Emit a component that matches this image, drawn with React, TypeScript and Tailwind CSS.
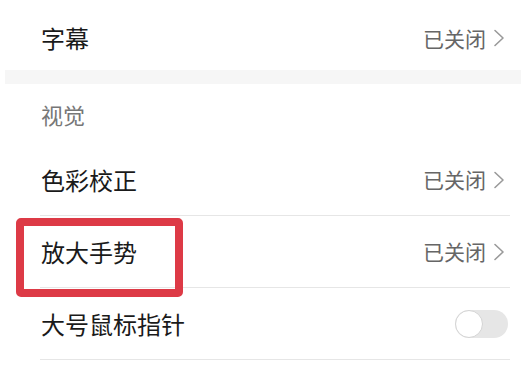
import React from "react";

const font = { fontFamily: '"Noto Sans CJK SC", "Noto Sans", sans-serif' };

function Chevron() {
  return (
    <svg width="14" height="18" viewBox="0 0 14 18" className="ml-[6px]">
      <path d="M3 1.5 L11 9 L3 16.5" fill="none" stroke="#9a9a9a" strokeWidth="1.6" strokeLinecap="round" strokeLinejoin="round" />
    </svg>
  );
}

function NavRow({ title }: { title: string }) {
  return (
    <div className="h-[72px] ml-[40px] mr-[11px] flex items-center justify-between border-b border-[#e6e6e6]">
      <span className="text-[24px] leading-none text-[#1a1a1a] pl-[1px]">{title}</span>
      <div className="flex items-center pr-[4px]">
        <span className="text-[21px] leading-none text-[#666666]">已关闭</span>
        <Chevron />
      </div>
    </div>
  );
}

export default function App() {
  return (
    <div className="relative w-[521px] h-[377px] bg-white overflow-hidden" style={font}>
      <div className="h-[70px] pt-[6px] ml-[40px] mr-[11px] flex items-center justify-between">
        <span className="text-[24px] leading-none text-[#1a1a1a] pl-[1px]">字幕</span>
        <div className="flex items-center pr-[4px]">
          <span className="text-[21px] leading-none text-[#666666]">已关闭</span>
          <Chevron />
        </div>
      </div>
      <div className="h-[14px] ml-[5px] bg-[#f6f6f6]" />
      <div className="h-[60px] ml-[41px] flex items-center">
        <span className="text-[22px] leading-none text-[#777777]">视觉</span>
      </div>
      <NavRow title="色彩校正" />
      <NavRow title="放大手势" />
      <div className="h-[72px] ml-[40px] mr-[11px] flex items-center justify-between border-b border-[#e6e6e6]">
        <span className="text-[24px] leading-none text-[#1a1a1a] pl-[1px]">大号鼠标指针</span>
        <div className="w-[53px] h-[28px] rounded-full bg-[#e6e6e6] flex items-center mr-[2px] mt-[1px]">
          <div className="w-[28px] h-[28px] rounded-full bg-white border-[1.5px] border-[#d4d4d4]" />
        </div>
      </div>
      <div className="absolute left-[16px] top-[218px] w-[167px] h-[79px] border-[8px] border-[#dd3a46] rounded-[5px]" />
    </div>
  );
}
